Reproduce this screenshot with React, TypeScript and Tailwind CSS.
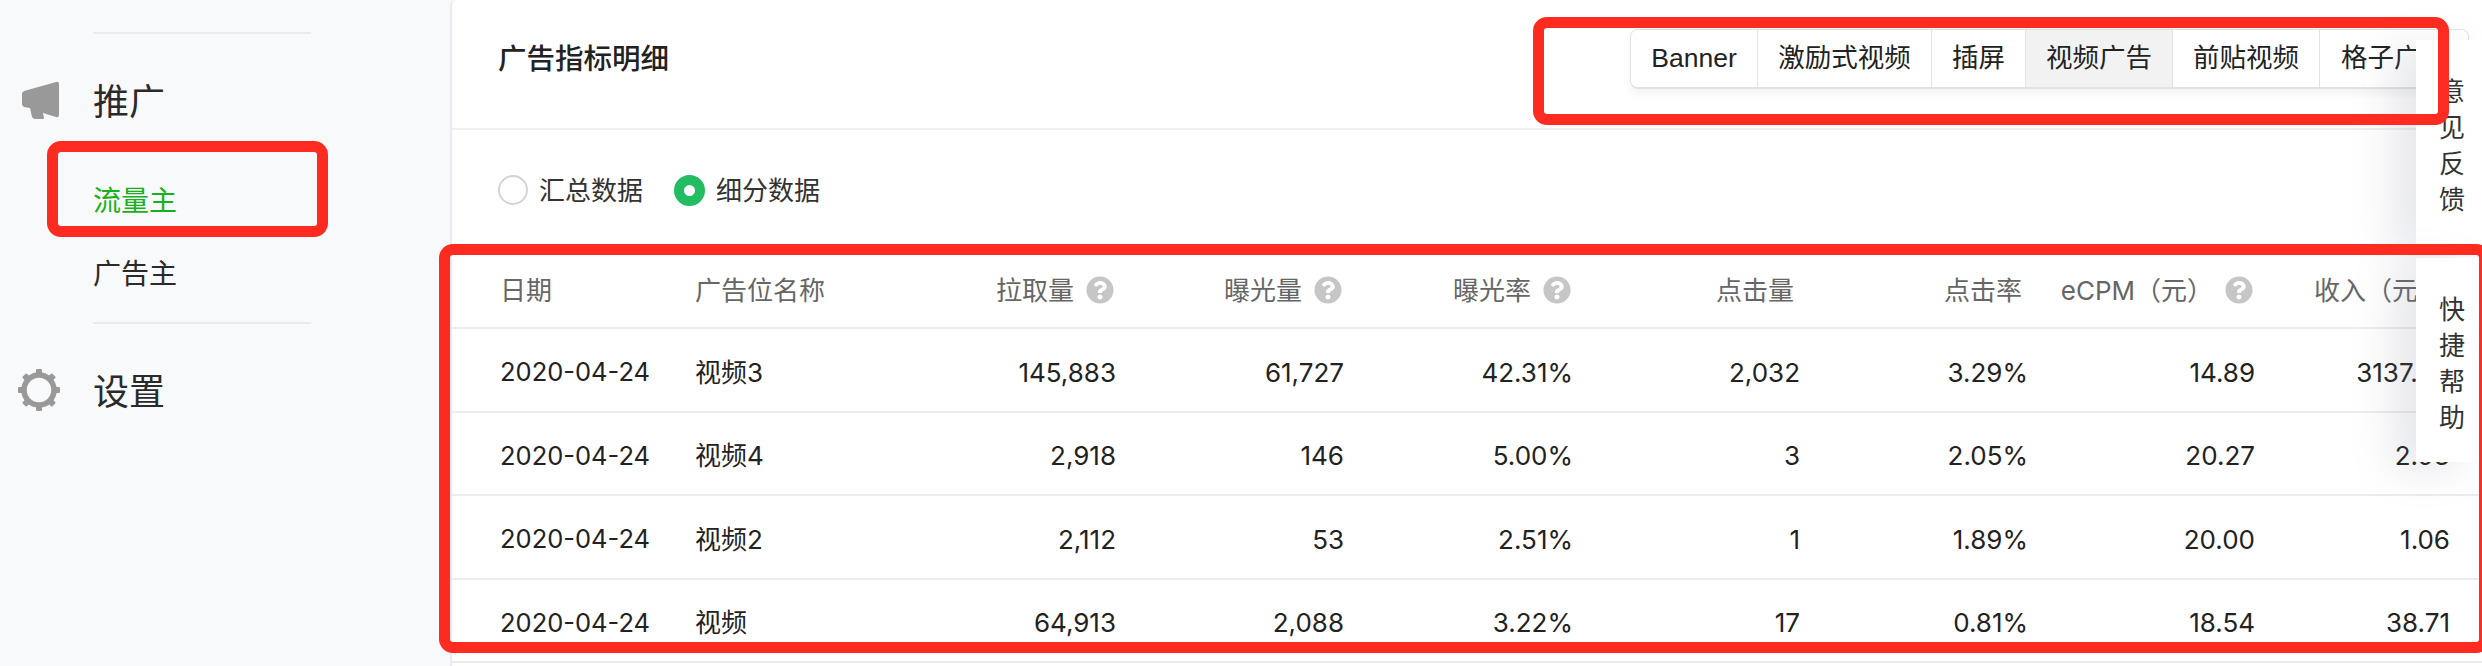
import React from 'react';
import { FaQuestionCircle } from 'react-icons/fa';

const gridClass = "grid grid-cols-[195px_200px_221px_228px_229px_227px_228px_227px_195px] pl-[48px] pr-[32px] items-center";

const tabs = ['Banner', '激励式视频', '插屏', '视频广告', '前贴视频', '格子广告'];
const tabWidths = ['w-[127px]', 'w-[174px]', 'w-[94px]', 'w-[147px]', 'w-[147px]', 'w-[148px]'];

const rows = [
  ['2020-04-24', '视频3', '145,883', '61,727', '42.31%', '2,032', '3.29%', '14.89', '3137.00'],
  ['2020-04-24', '视频4', '2,918', '146', '5.00%', '3', '2.05%', '20.27', '2.93'],
  ['2020-04-24', '视频2', '2,112', '53', '2.51%', '1', '1.89%', '20.00', '1.06'],
  ['2020-04-24', '视频', '64,913', '2,088', '3.22%', '17', '0.81%', '18.54', '38.71'],
];

const MegaphoneIcon = () => (
  <svg width="38" height="38" viewBox="0 0 38 38" fill="#999999">
    <path d="M0 12 L2 10 L34 1 Q37 0 37 3 L37 33 Q37 37 34 36 L21 32 L22 37 Q22 38 21 38 L13 38 Q11 38 10 36 L8 27 L2 26 L0 24 Z" />
  </svg>
);

const GearIcon = () => (
  <svg width="42" height="42" viewBox="0 0 42 42" fill="#999999">
    <circle cx="21" cy="21" r="15" fill="none" stroke="#999999" strokeWidth="5.5" />
    {[0, 45, 90, 135, 180, 225, 270, 315].map(angle => (
      <rect key={angle} x="18" y="0" width="6" height="6" rx="1" transform={`rotate(${angle} 21 21)`} />
    ))}
  </svg>
);

const HeaderCell = ({ label, help }: { label: string; help?: boolean }) => (
  <div className={`flex items-center justify-end gap-[12px] text-[26px] text-[#666666] ${help ? 'pr-[2px]' : 'pr-[6px]'}`}>
    <span>{label}</span>
    {help && <FaQuestionCircle className="w-[28px] h-[28px] shrink-0 text-[#c6c6c6]" />}
  </div>
);

const SideFloat = ({ label, className }: { label: string; className: string }) => (
  <div className={`absolute left-[2416px] w-[66px] h-[204px] pl-[6px] pt-[8px] bg-white shadow-[-24px_8px_40px_rgba(120,130,150,0.18)] flex flex-col items-center justify-center text-[26px] leading-[36px] text-[#333333] ${className}`}>
    {label.split('').map((ch, i) => (
      <span key={i}>{ch}</span>
    ))}
  </div>
);

const App: React.FC = () => {
  return (
    <div className="relative flex w-[2482px] h-[666px] overflow-hidden bg-[#f8f9fb] text-[#222222] [font-family:'Inter','Noto_Sans_CJK_SC',sans-serif]">
      <aside className="w-[450px] shrink-0 pt-[32px]">
        <div className="ml-[93px] w-[218px] h-[2px] bg-[#e9eaec]" />
        <div className="flex items-center h-[72px] mt-[30px] text-[36px] text-[#2a2a2a]">
          <div className="w-[93px] pl-[22px]"><MegaphoneIcon /></div>
          <span className="pt-[4px]">推广</span>
        </div>
        <div className="flex items-center h-[72px] mt-[28px] pl-[93px] pt-[2px] text-[28px] text-[#18b01c]">流量主</div>
        <div className="flex items-center h-[72px] pl-[93px] pt-[3px] text-[28px] text-[#2a2a2a]">广告主</div>
        <div className="ml-[93px] mt-[14px] w-[218px] h-[2px] bg-[#e9eaec]" />
        <div className="flex items-center h-[72px] mt-[30px] text-[36px] text-[#2a2a2a]">
          <div className="w-[93px] pl-[18px]"><GearIcon /></div>
          <span className="pt-[3px]">设置</span>
        </div>
      </aside>

      <main className="flex-1 min-w-0 bg-white border-l-2 border-[#e9eaee] rounded-tl-[6px]">
        <div className="flex items-center justify-between h-[130px] border-b-2 border-[#efefef] pl-[46px] pb-[10px]">
          <h1 className="text-[28.5px] font-medium text-[#222222]">广告指标明细</h1>
          <div className="flex h-[60px] mr-[13px] shrink-0 rounded-[8px] border border-[#e2e2e2] border-b-2 shadow-[0_5px_8px_rgba(0,0,0,0.05)] overflow-hidden">
            {tabs.map((tab, i) => (
              <div
                key={tab}
                className={`${tabWidths[i]} flex items-center justify-center text-[26.5px] [font-family:'Liberation_Sans','Noto_Sans_CJK_SC',sans-serif] border-r border-[#e2e2e2] last:border-r-0 ${tab === '视频广告' ? 'bg-[#f2f2f2]' : 'bg-white'}`}
              >
                {tab}
              </div>
            ))}
          </div>
        </div>

        <div className="flex items-center h-[115px] pl-[46px] pt-[5px] text-[26px] text-[#333333]">
          <span className="w-[30px] h-[30px] rounded-full border-2 border-[#d4d4d4] bg-white" />
          <span className="ml-[11px]">汇总数据</span>
          <span className="ml-[31px] w-[31px] h-[31px] rounded-full border-[10px] border-[#22bd63] bg-white" />
          <span className="ml-[11px]">细分数据</span>
        </div>

        <div className={`${gridClass} h-[84px] pt-[8px] border-b-2 border-[#ececec]`}>
          <span className="text-[26px] text-[#666666]">日期</span>
          <span className="text-[26px] text-[#666666]">广告位名称</span>
          <HeaderCell label="拉取量" help />
          <HeaderCell label="曝光量" help />
          <HeaderCell label="曝光率" help />
          <HeaderCell label="点击量" />
          <HeaderCell label="点击率" />
          <HeaderCell label="eCPM（元）" help />
          <HeaderCell label="收入（元）" />
        </div>

        {rows.map((row, r) => (
          <div key={r} className={`${gridClass} h-[83.5px] pt-[5px] border-b-2 border-[#ececec] text-[26px]`}>
            {row.map((cell, c) => (
              <span key={c} className={c === 0 ? 'text-[25.5px]' : c > 1 ? 'text-right' : ''}>{cell}</span>
            ))}
          </div>
        ))}
      </main>

      <SideFloat label="意见反馈" className="top-[40px]" />
      <SideFloat label="快捷帮助" className="top-[258px]" />

      {/* 截图上的红色标注框 */}
      <div className="absolute left-[47px] top-[141px] w-[281px] h-[96px] border-[11px] border-[#fe2c20] rounded-[14px]" />
      <div className="absolute left-[1533px] top-[17px] w-[916px] h-[108px] border-[11px] border-[#fe2c20] rounded-[14px]" />
      <div className="absolute left-[439px] top-[244px] w-[2051px] h-[409px] border-[11px] border-[#fe2c20] rounded-[14px]" />
    </div>
  );
};

export default App;
